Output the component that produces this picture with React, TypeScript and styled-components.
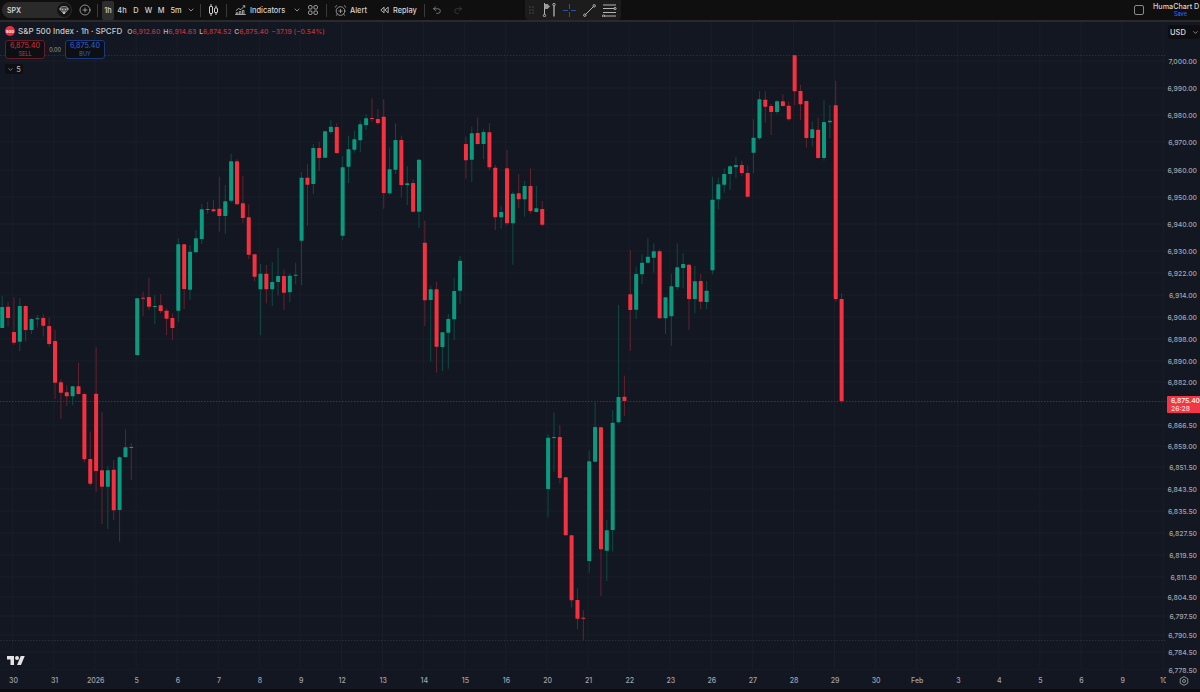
import React from 'react';
import styled, { createGlobalStyle } from 'styled-components';
import { ChevronDown, CirclePlus, Undo2, Redo2, AlarmClockPlus } from 'lucide-react';

type Row = [string, number, number, number, number];

// y values read off the picture at 3x, each block has its own origin
const blocks: { oy: number; rows: Row[] }[] = [
  {
    oy: 290,
    rows: [
      ['g', 18, 51, 114, 114], ['r', 35, 50, 84, 110], ['r', 22, 126, 158, 165], ['g', 24, 48, 155, 183],
      ['r', 46, 48, 120, 155], ['g', 85, 87, 120, 132], ['g', 75, 85, 88, 112], ['r', 73, 84, 107, 140],
      ['r', 82, 108, 162, 170], ['r', 120, 153, 278, 327], ['r', 268, 277, 308, 387], ['r', 286, 307, 319, 348],
      ['g', 288, 289, 319, 345], ['r', 218, 289, 312, 314], ['r', 308, 312, 508, 517], ['r', 425, 507, 581, 588],
      ['r', 172, 311, 543, 606], ['r', 367, 541, 590, 702], ['g', 528, 541, 590, 717], ['r', 510, 539, 661, 690],
      ['g', 498, 502, 660, 755], ['g', 418, 472, 501, 503], ['r', 460, 471, 474, 570],
    ],
  },
  {
    oy: 90,
    rows: [
      ['g', 623, 625, 795, 797], ['r', 605, 623, 626, 678], ['r', 563, 621, 650, 660], ['g', 615, 648, 651, 703],
      ['r', 612, 646, 663, 670], ['r', 655, 662, 686, 735], ['r', 670, 684, 714, 750], ['g', 445, 463, 662, 696],
      ['r', 462, 463, 597, 657], ['g', 465, 485, 599, 630], ['g', 420, 445, 487, 488], ['g', 342, 358, 447, 462],
      ['r', 335, 357, 360, 372], ['r', 330, 358, 364, 367], ['r', 260, 356, 378, 425], ['g', 285, 334, 378, 432],
      ['g', 192, 214, 332, 338], ['r', 208, 214, 343, 345], ['r', 258, 340, 384, 400], ['r', 343, 382, 494, 507],
      ['r', 492, 493, 560, 574], ['g', 522, 551, 598, 735], ['r', 525, 551, 598, 640], ['g', 517, 576, 598, 648],
      ['g', 474, 558, 576, 617], ['r', 538, 558, 608, 660], ['g', 550, 557, 607, 636], ['g', 518, 554, 557, 583],
      ['g', 247, 263, 452, 585], ['r', 223, 263, 284, 408], ['g', 162, 174, 282, 312], ['r', 155, 174, 204, 243],
      ['g', 122, 124, 203, 204], ['g', 90, 110, 126, 132], ['r', 100, 111, 189, 192], ['g', 198, 232, 437, 450],
      ['g', 137, 178, 230, 279], ['g', 122, 148, 179, 188], ['g', 92, 103, 151, 186], ['g', 73, 85, 105, 120],
      ['r', 25, 84, 87, 95], ['r', 57, 87, 99, 105], ['r', 28, 80, 309, 356], ['g', 172, 238, 310, 315],
      ['g', 100, 150, 239, 252], ['r', 137, 150, 285, 323], ['g', 228, 280, 285, 345], ['r', 268, 279, 365, 367],
      ['g', 207, 209, 365, 413], ['r', 392, 458, 631, 708], ['g', 587, 598, 630, 815], ['r', 575, 598, 770, 848],
      ['g', 727, 727, 771, 843], ['g', 672, 687, 728, 836], ['g', 563, 603, 688, 750], ['g', 498, 512, 602, 642],
      ['r', 140, 162, 211, 266], ['g', 110, 130, 209, 276], ['r', 82, 129, 162, 164], ['g', 118, 126, 162, 207],
      ['r', 100, 127, 232, 240], ['r', 225, 233, 382, 420], ['g', 348, 366, 382, 416], ['r', 180, 235, 400, 407],
      ['g', 305, 311, 400, 524], ['r', 252, 310, 328, 354], ['g', 273, 288, 328, 380], ['r', 235, 288, 363, 371],
      ['g', 288, 355, 366, 367], ['r', 333, 357, 404, 408],
    ],
  },
  {
    oy: 230,
    rows: [
      ['g', 612, 623, 777, 862], ['g', 547, 621, 624, 725], ['r', 585, 621, 744, 760], ['r', 741, 742, 916, 917],
      ['r', 915, 916, 1111, 1132], ['r', 1075, 1110, 1166, 1198], ['r', 1140, 1163, 1166, 1230], ['g', 662, 694, 993, 1028],
      ['g', 517, 591, 695, 696], ['r', 591, 592, 958, 1098], ['g', 870, 901, 962, 1053], ['g', 540, 578, 900, 965],
      ['g', 225, 501, 577, 580], ['r', 437, 500, 513, 558], ['r', 60, 193, 240, 362], ['g', 110, 132, 239, 267],
      ['g', 72, 98, 133, 162], ['g', 25, 80, 98, 98], ['g', 40, 64, 83, 128], ['r', 58, 64, 265, 267],
      ['g', 202, 202, 265, 312], ['g', 132, 169, 259, 347], ['g', 40, 112, 171, 180], ['g', 70, 102, 114, 175],
      ['r', 102, 104, 207, 300], ['g', 108, 154, 207, 250], ['r', 132, 153, 215, 237], ['g', 153, 182, 216, 237],
    ],
  },
  {
    oy: 50,
    rows: [
      ['g', 380, 449, 661, 673], ['g', 383, 403, 448, 478], ['g', 355, 372, 404, 428], ['g', 345, 349, 372, 420],
      ['g', 320, 345, 351, 384], ['r', 332, 345, 369, 378], ['r', 347, 369, 440, 443], ['g', 208, 263, 308, 370],
      ['g', 124, 148, 265, 270], ['r', 124, 149, 170, 218], ['r', 162, 168, 186, 255], ['g', 150, 154, 186, 192],
      ['r', 133, 154, 168, 170], ['r', 155, 167, 208, 212], ['r', 15, 16, 124, 166], ['r', 105, 123, 163, 210],
      ['r', 152, 153, 264, 292], ['g', 215, 238, 264, 290], ['r', 203, 239, 324, 326], ['g', 150, 216, 324, 332],
      ['g', 165, 212, 217, 265], ['r', 92, 166, 747, 755], ['r', 730, 747, 1053, 1060],
    ],
  },
];

const candles = blocks.flatMap(({ oy, rows }) =>
  rows.map(([kind, wt, bt, bb, wb]) => ({
    kind,
    wickTop: oy + wt / 3,
    bodyTop: oy + bt / 3,
    bodyBottom: oy + bb / 3,
    wickBottom: oy + wb / 3,
  })),
);

const STEP = 5.87;
const FIRST_X = 2.2;
const PLOT_TOP = 22;

const priceTicks: [string, number][] = [
  ['7,000.00', 61], ['6,990.00', 88], ['6,980.00', 115], ['6,970.00', 142], ['6,960.00', 170], ['6,950.00', 197],
  ['6,940.00', 224], ['6,930.00', 251], ['6,922.00', 273], ['6,914.00', 295], ['6,906.00', 317], ['6,898.00', 339],
  ['6,890.00', 361], ['6,882.00', 382], ['6,866.50', 425], ['6,859.00', 446], ['6,851.50', 467], ['6,843.50', 489],
  ['6,835.50', 511], ['6,827.50', 533], ['6,819.50', 555], ['6,811.50', 577], ['6,804.50', 597], ['6,797.50', 616],
  ['6,790.50', 635], ['6,784.50', 652], ['6,778.50', 670],
];

const timeTicks = ['30', '31', '2026', '5', '6', '7', '8', '9', '12', '13', '14', '15', '16', '20', '21', '22', '23', '26', '27', '28', '29', '30', 'Feb', '3', '4', '5', '6', '9', '10'];

const GlobalStyle = createGlobalStyle`
  html, body {
    margin: 0;
    background: #131722;
    overflow: hidden;
  }
`;

const Page = styled.div`
  width: 1200px;
  height: 692px;
  display: flex;
  flex-direction: column;
  font-family: Inter, "Liberation Sans", sans-serif;
  background: #131721;
  color: #d4d4d4;
  position: relative;
`;

const TopBar = styled.div`
  height: 20px;
  flex: none;
  display: flex;
  align-items: center;
  background: #0f0f0f;
  border-bottom: 2px solid #2a2a2a;
  padding-left: 2px;
  font-size: 7.4px;
  font-weight: 500;
`;

const SearchPill = styled.div`
  width: 70px;
  height: 16px;
  box-sizing: border-box;
  border-radius: 8px;
  background: #2a2a2a;
  display: flex;
  align-items: center;
  justify-content: space-between;
  padding: 0 1px 0 5px;
  font-size: 7px;
  font-weight: 600;
`;

const PillBadge = styled.span`
  width: 14px;
  height: 14px;
  border-radius: 50%;
  background: #141414;
  display: flex;
  align-items: center;
  justify-content: center;
`;

const Divider = styled.span<{ $gap?: number }>`
  width: 1px;
  height: 13px;
  flex: none;
  background: #3a3a3a;
  margin: 0 ${({ $gap }) => $gap ?? 0}px;
`;

const IconSlot = styled.span<{ $w: number }>`
  width: ${({ $w }) => $w}px;
  flex: none;
  display: flex;
  align-items: center;
  justify-content: center;
  color: #cfcfcf;
`;

const Interval = styled.span<{ $active?: boolean; $w: number }>`
  width: ${({ $w }) => $w}px;
  height: 19px;
  flex: none;
  display: flex;
  align-items: center;
  justify-content: center;
  border-radius: 2px;
  background: ${({ $active }) => ($active ? '#2e2e2e' : 'transparent')};
`;

const ToolLabel = styled.span<{ $w: number }>`
  width: ${({ $w }) => $w}px;
  flex: none;
  white-space: nowrap;
`;

const DrawingPill = styled.div`
  position: absolute;
  left: 525px;
  top: 0;
  width: 96px;
  height: 20px;
  border-radius: 0 0 4px 4px;
  background: #1c1c1c;
  display: flex;
  align-items: center;
  justify-content: space-between;
  padding: 0 4px;
  box-sizing: border-box;
  color: #b4b4b4;
`;

const Account = styled.div`
  margin-left: auto;
  width: 66px;
  display: flex;
  align-items: center;
  gap: 9px;
  flex: none;
`;

const Checkbox = styled.span`
  width: 10px;
  height: 10px;
  flex: none;
  box-sizing: border-box;
  border: 1px solid #8a8a8a;
  border-radius: 2px;
`;

const AccountText = styled.div`
  display: flex;
  flex-direction: column;
  align-items: flex-start;
  white-space: nowrap;
  line-height: 9px;
  font-size: 7.2px;
  font-weight: 500;
`;

const SaveLink = styled.span`
  color: #2962ff;
  font-size: 5.5px;
  line-height: 7px;
  margin-left: 21px;
`;

const ChartRow = styled.div`
  flex: 1;
  display: flex;
  min-height: 0;
`;

const Plot = styled.div`
  width: 1166px;
  position: relative;
  overflow: hidden;
`;

const PlotSvg = styled.svg`
  display: block;
`;

const Legend = styled.div`
  position: absolute;
  left: 5px;
  top: 3px;
  display: flex;
  flex-direction: column;
  align-items: flex-start;
`;

const TitleRow = styled.div`
  display: flex;
  align-items: center;
  height: 12px;
  font-size: 8px;
  font-weight: 500;
  white-space: nowrap;
  color: #c8c8c8;
`;

const SymbolDot = styled.span`
  width: 10px;
  height: 10px;
  border-radius: 50%;
  background: #e8303f;
  color: #fff;
  font-size: 4px;
  font-weight: 700;
  display: flex;
  align-items: center;
  justify-content: center;
  margin-right: 3px;
`;

const Ohlc = styled.span`
  margin-left: 5px;
  font-size: 6.8px;
  color: #c2303e;
  display: flex;
  gap: 3px;
  b {
    font-weight: 500;
    color: #bdbdbd;
  }
`;

const OrderRow = styled.div`
  display: flex;
  align-items: center;
  margin-top: 3px;
`;

const OrderBox = styled.div<{ $buy?: boolean }>`
  width: 40px;
  height: 19px;
  box-sizing: border-box;
  border-radius: 3px;
  border: 1px solid ${({ $buy }) => ($buy ? '#1b3a7c' : '#5e1f29')};
  background: #0e0f13;
  color: ${({ $buy }) => ($buy ? '#2c62e8' : '#d6303f')};
  display: flex;
  flex-direction: column;
  align-items: center;
  justify-content: center;
  font-size: 7.2px;
  line-height: 8px;
  span {
    font-size: 5.5px;
  }
`;

const Spread = styled.span`
  width: 20px;
  text-align: center;
  font-size: 5.5px;
  color: #a0a0a0;
`;

const Collapse = styled.div`
  margin-top: 5px;
  height: 10px;
  width: 18px;
  display: flex;
  align-items: center;
  justify-content: center;
  gap: 2px;
  border-radius: 2px;
  background: #0e0f13;
  font-size: 7.5px;
  color: #bdbdbd;
`;

const Logo = styled.svg`
  position: absolute;
  left: 7px;
  bottom: 6px;
`;

const PriceAxis = styled.div`
  flex: 1;
  position: relative;
`;

const CurrencyBox = styled.div`
  position: absolute;
  left: 2px;
  right: 0;
  top: 3px;
  height: 14px;
  border-radius: 3px;
  background: #0e0e10;
  display: flex;
  align-items: center;
  justify-content: space-between;
  padding: 0 1px 0 2px;
  font-size: 7.5px;
  font-weight: 500;
  color: #dcdcdc;
`;

const PriceTick = styled.span`
  position: absolute;
  right: 3px;
  transform: translateY(-50%);
  font-size: 6.8px;
  font-weight: 500;
  color: #a2a5ac;
  white-space: nowrap;
`;

const LastPrice = styled.div`
  position: absolute;
  left: 1px;
  right: 0;
  top: 374px;
  height: 17px;
  background: #f23645;
  color: #fff;
  font-size: 6.8px;
  font-weight: 500;
  line-height: 8px;
  border-radius: 1px 0 0 1px;
  padding-left: 4px;
  display: flex;
  flex-direction: column;
  justify-content: center;
  span {
    color: #ffd9dc;
  }
`;

const BottomRow = styled.div`
  height: 17px;
  flex: none;
  display: flex;
  align-items: center;
`;

const TimeAxis = styled.div`
  width: 1166px;
  display: flex;
  overflow: hidden;
`;

const TimeTick = styled.span`
  flex: 0 0 41.09px;
  text-align: center;
  font-size: 7px;
  font-weight: 500;
  color: #a2a5ac;
  &:first-child {
    margin-left: -7px;
  }
`;

const GearSlot = styled.span`
  flex: 1;
  display: flex;
  justify-content: center;
  padding-left: 2px;
  color: #9a9da4;
`;

const Strip = styled.div`
  height: 3px;
  flex: none;
  background: #0c0c0c;
`;

const lineIcon = { fill: 'none', stroke: 'currentColor', strokeWidth: 1 };

const ChartTypeIcon = () => (
  <svg width="9" height="12" viewBox="0 0 9 12" {...lineIcon}>
    <path d="M2 0v2.5M2 9.5V12M7 1.5V4M7 8.5V11" />
    <rect x=".5" y="2.5" width="3" height="7" rx=".5" />
    <rect x="5.5" y="4" width="3" height="4.5" rx=".5" />
  </svg>
);

const IndicatorsIcon = () => (
  <svg width="11" height="10" viewBox="0 0 14 13" {...lineIcon}>
    <path d="M1 7.5 4.5 4.5 7.5 6 12.5 1M10 1h2.5v2.5" />
    <path d="M1.5 12.5V10h2v2.5M5.5 12.5V8.5h2v4M9.5 12.5V7h2v5.5M0 12.5h14" />
  </svg>
);

const LayoutIcon = () => (
  <svg width="10" height="10" viewBox="0 0 13 13" {...lineIcon}>
    <rect x=".7" y=".7" width="4.6" height="4.6" rx="1.6" />
    <rect x="7.7" y=".7" width="4.6" height="4.6" rx="1.6" />
    <rect x=".7" y="7.7" width="4.6" height="4.6" rx="1.6" />
    <rect x="7.7" y="7.7" width="4.6" height="4.6" rx="1.6" />
  </svg>
);

const ReplayIcon = () => (
  <svg width="9" height="8" viewBox="0 0 11 9" {...lineIcon}>
    <path d="M5 1 1 4.5 5 8ZM10 1 6 4.5 10 8Z" strokeLinejoin="round" />
  </svg>
);

const DiamondIcon = () => (
  <svg width="10" height="9" viewBox="0 0 10 9" {...lineIcon}>
    <path d="M2.5.8h5L9.3 3 5 8 .7 3ZM.7 3h8.6M3.5 3 5 8l1.5-5" strokeWidth=".8" />
  </svg>
);

const DrawGrip = () => (
  <svg width="6" height="8" viewBox="0 0 6 8" fill="#4a4a4a">
    {[1, 4].map((x) => [1, 4, 7].map((y) => <circle key={`${x}-${y}`} cx={x} cy={y} r=".8" />))}
  </svg>
);

const FlagPinIcon = () => (
  <svg width="15" height="14" viewBox="0 0 15 14" {...lineIcon}>
    <path d="M2.5 0v11.5" />
    <path d="M2.5 1H5.5L8 3.5 5.5 6H2.5Z" fill="#9a9a9a" stroke="none" />
    <circle cx="2.5" cy="12.5" r="1.2" />
    <circle cx="12" cy="1.6" r="1.2" />
    <path d="M12 3v10.5" strokeWidth="1.3" />
  </svg>
);

const CrosshairIcon = () => (
  <svg width="13" height="13" viewBox="0 0 13 13" fill="none" stroke="#2a4fb0" strokeWidth="1">
    <path d="M6.5 0v5M6.5 8v5M0 6.5h5M8 6.5h5" />
  </svg>
);

const TrendIcon = () => (
  <svg width="13" height="13" viewBox="0 0 13 13" {...lineIcon}>
    <path d="M2.5 10.5 10.5 2.5" />
    <circle cx="1.8" cy="11.2" r="1.2" />
    <circle cx="11.2" cy="1.8" r="1.2" />
  </svg>
);

const FibIcon = () => (
  <svg width="15" height="13" viewBox="0 0 15 13" {...lineIcon}>
    <path d="M1 1h13M1 4.5h11.5M1 8.5h13M2.5 12H14" />
    <circle cx="13" cy="4.5" r="1.1" />
    <circle cx="1.6" cy="12" r="1.1" />
  </svg>
);

const GearIcon = () => (
  <svg width="10" height="10" viewBox="0 0 10 10" {...lineIcon}>
    <path d="M5 .6 8.8 2.8v4.4L5 9.4 1.2 7.2V2.8Z" strokeWidth=".9" strokeLinejoin="round" />
    <circle cx="5" cy="5" r="1.5" strokeWidth=".9" />
  </svg>
);

const Chart = () => (
  <PlotSvg width="1166" height="648" viewBox={`0 ${PLOT_TOP} 1166 648`}>
    {priceTicks.map(([label, y]) => (
      <line key={label} x1="0" x2="1166" y1={y} y2={y} stroke="#1a1e29" strokeWidth="1" />
    ))}
    {timeTicks.map((label, i) => (
      <line key={`${label}-${i}`} x1={12.7 + i * 41.09} x2={12.7 + i * 41.09} y1={PLOT_TOP} y2="670" stroke="#1a1e29" strokeWidth="1" />
    ))}
    <line x1="0" x2="1166" y1="55.5" y2="55.5" stroke="#32353d" strokeDasharray="1.5 1.5" strokeWidth=".8" />
    <line x1="0" x2="1166" y1="640.5" y2="640.5" stroke="#32353d" strokeDasharray="1.5 1.5" strokeWidth=".8" />
    <line x1="0" x2="1166" y1="401.5" y2="401.5" stroke="#7a2c38" strokeDasharray="1.5 1.5" strokeWidth=".8" />
    {candles.map((c, i) => {
      const x = FIRST_X + i * STEP;
      const red = c.kind === 'r';
      return (
        <g key={i}>
          <line x1={x} x2={x} y1={c.wickTop} y2={c.wickBottom} stroke={red ? '#62232f' : '#0c4b44'} strokeWidth="1" />
          <rect x={x - 2} y={c.bodyTop} width="4" height={Math.max(c.bodyBottom - c.bodyTop, 1)} rx=".5" fill={red ? '#f7303f' : '#089b80'} />
        </g>
      );
    })}
  </PlotSvg>
);

export default function App() {
  return (
    <Page>
      <GlobalStyle />
      <TopBar>
        <SearchPill>
          SPX
          <PillBadge>
            <DiamondIcon />
          </PillBadge>
        </SearchPill>
        <IconSlot $w={25}>
          <CirclePlus size={12} strokeWidth={1.3} />
        </IconSlot>
        <Divider />
        <IconSlot $w={4} />
        <Interval $active $w={12}>1h</Interval>
        <Interval $w={16}>4h</Interval>
        <Interval $w={12}>D</Interval>
        <Interval $w={13}>W</Interval>
        <Interval $w={12}>M</Interval>
        <Interval $w={18}>5m</Interval>
        <IconSlot $w={12}>
          <ChevronDown size={8} />
        </IconSlot>
        <Divider $gap={3} />
        <IconSlot $w={19}>
          <ChartTypeIcon />
        </IconSlot>
        <Divider $gap={3} />
        <IconSlot $w={20}>
          <IndicatorsIcon />
        </IconSlot>
        <ToolLabel $w={40}>Indicators</ToolLabel>
        <IconSlot $w={13}>
          <ChevronDown size={8} />
        </IconSlot>
        <IconSlot $w={20}>
          <LayoutIcon />
        </IconSlot>
        <Divider $gap={3} />
        <IconSlot $w={20}>
          <AlarmClockPlus size={13} strokeWidth={1.2} />
        </IconSlot>
        <ToolLabel $w={25}>Alert</ToolLabel>
        <IconSlot $w={18}>
          <ReplayIcon />
        </IconSlot>
        <ToolLabel $w={31}>Replay</ToolLabel>
        <Divider />
        <IconSlot $w={24}>
          <Undo2 size={10} strokeWidth={1.2} />
        </IconSlot>
        <IconSlot $w={18}>
          <Redo2 size={10} strokeWidth={1.2} color="#5a5a5a" />
        </IconSlot>
        <DrawingPill>
          <DrawGrip />
          <FlagPinIcon />
          <CrosshairIcon />
          <TrendIcon />
          <FibIcon />
        </DrawingPill>
        <Account>
          <Checkbox />
          <AccountText>
            HumaChart D
            <SaveLink>Save</SaveLink>
          </AccountText>
        </Account>
      </TopBar>
      <ChartRow>
        <Plot>
          <Chart />
          <Legend>
            <TitleRow>
              <SymbolDot>500</SymbolDot>
              S&amp;P 500 Index · 1h · SPCFD
              <Ohlc>
                <span><b>O</b>6,912.60</span>
                <span><b>H</b>6,914.63</span>
                <span><b>L</b>6,874.52</span>
                <span><b>C</b>6,875.40</span>
                <span>−37.19 (−0.54%)</span>
              </Ohlc>
            </TitleRow>
            <OrderRow>
              <OrderBox>
                6,875.40
                <span>SELL</span>
              </OrderBox>
              <Spread>0.00</Spread>
              <OrderBox $buy>
                6,875.40
                <span>BUY</span>
              </OrderBox>
            </OrderRow>
            <Collapse>
              <ChevronDown size={7} />5
            </Collapse>
          </Legend>
          <Logo width="18" height="10" viewBox="0 0 36 20" fill="#e4e4e4">
            <path d="M14 18H7V7H0V0h14zM28 18h-8L27.5 0h8z" />
            <circle cx="20" cy="4" r="4" />
          </Logo>
        </Plot>
        <PriceAxis>
          <CurrencyBox>
            USD
            <ChevronDown size={7} />
          </CurrencyBox>
          {priceTicks.map(([label, y]) => (
            <PriceTick key={label} style={{ top: y - PLOT_TOP }}>{label}</PriceTick>
          ))}
          <LastPrice>
            6,875.40
            <span>26:28</span>
          </LastPrice>
        </PriceAxis>
      </ChartRow>
      <BottomRow>
        <TimeAxis>
          {timeTicks.map((label, i) => (
            <TimeTick key={`${label}-${i}`}>{label}</TimeTick>
          ))}
        </TimeAxis>
        <GearSlot>
          <GearIcon />
        </GearSlot>
      </BottomRow>
      <Strip />
    </Page>
  );
}
